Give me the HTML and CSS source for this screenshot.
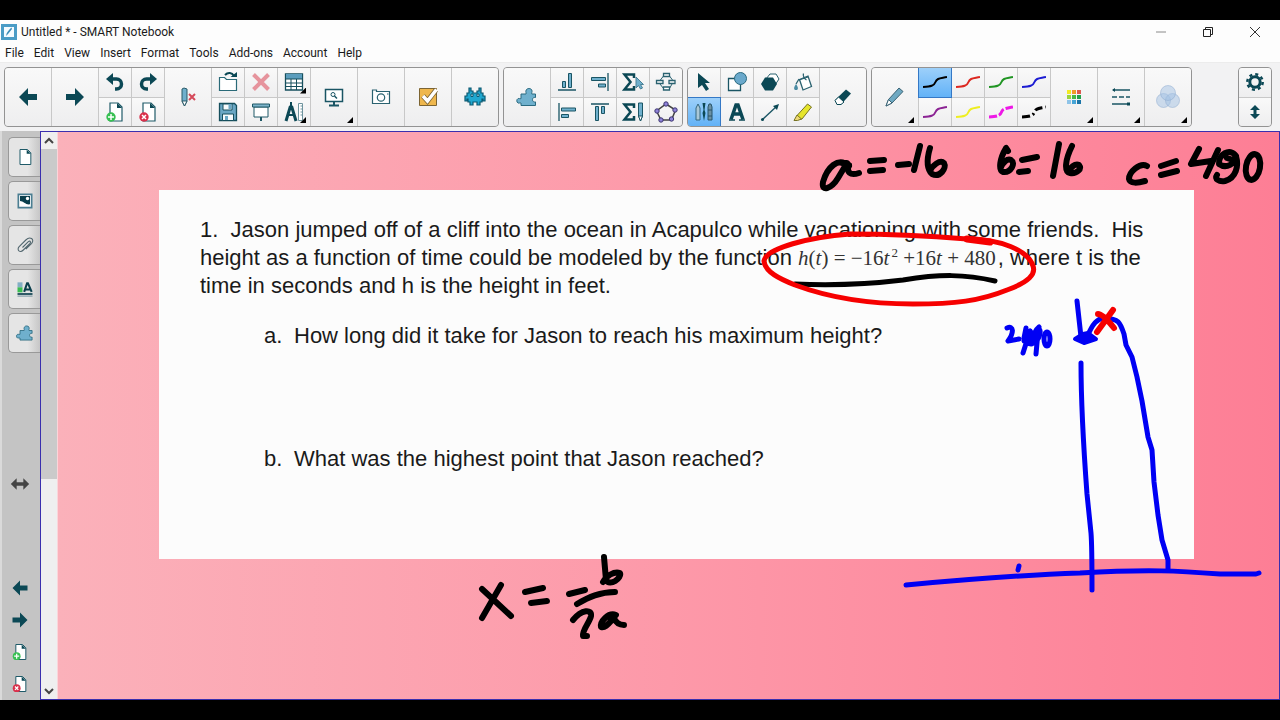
FILE: index.html
```html
<!DOCTYPE html>
<html lang="en">
<head>
<meta charset="utf-8">
<title>Untitled * - SMART Notebook</title>
<link rel="stylesheet" href="styles.css">
</head>
<body>
<svg class="defs" aria-hidden="true">
  <symbol id="left" viewBox="0 0 24 24"><path fill="#0b4855" d="M3 12l9-9v6h9v6h-9v6z"/></symbol>
  <symbol id="right" viewBox="0 0 24 24"><path fill="#0b4855" d="M21 12l-9-9v6H3v6h9v6z"/></symbol>
  <symbol id="page" viewBox="0 0 24 24"><path d="M6 3h9l4 4v14H6z" fill="#fff" stroke="#1f5a68" stroke-width="1.2"/><path d="M14 3v5h5z" fill="#0b4855"/></symbol>
  <symbol id="page-add" viewBox="0 0 24 24"><path d="M7 3h8l4 4v14H7z" fill="#fff" stroke="#1f5a68" stroke-width="1.2"/><path d="M14 3v5h5z" fill="#0b4855"/><circle cx="8" cy="17" r="4.7" fill="#37c052"/><path d="M8 14v6M5 17h6" stroke="#fff" stroke-width="1.5"/></symbol>
  <symbol id="page-del" viewBox="0 0 24 24"><path d="M7 3h8l4 4v14H7z" fill="#fff" stroke="#1f5a68" stroke-width="1.2"/><path d="M14 3v5h5z" fill="#0b4855"/><circle cx="8" cy="17" r="4.7" fill="#d9304b"/><path d="M6 15l4 4M10 15l-4 4" stroke="#fff" stroke-width="1.5"/></symbol>
  <symbol id="puzzle" viewBox="0 0 24 24"><path d="M6 9h5c.6-1.200-.8-2 .2-4 1-2 4.600-2 5.600 0 .8 2-.6 2.800 0 4H20.500v3.500c-1.500-.4-3 .3-3 2.200s1.500 2.600 3 2.200V20.500H6V18c-1.300-.5-1.800.5-3 0-1.600-.8-1.600-3.600 0-4.400 1.200-.5 1.700.4 3 0z" fill="#6fb0cd" stroke="#2a6a80" stroke-width="1"/></symbol>
  <symbol id="wave" viewBox="0 0 24 24"><path d="M0 17c8-.5 11-1 12.500-5S17 8.500 24 7" fill="none" stroke="currentColor" stroke-width="2"/></symbol>
</svg>
<div class="window">
  <header class="titlebar">
    <svg class="app-icon" viewBox="0 0 16 16"><rect x="1.500" y="1.500" width="13" height="13" fill="#f4fbff" stroke="#4a9cc6" stroke-width="3"/><path d="M5 12c.5-4 3-6 5.500-8.500L11 5 7 10z" fill="#3d8db8"/></svg>
    <h1 class="title">Untitled * - SMART Notebook</h1>
    <div class="caption">
      <button class="caption-btn" aria-label="Minimize"><svg viewBox="0 0 12 12"><path d="M1 6h10" stroke="#8a8a8a"/></svg></button>
      <button class="caption-btn" aria-label="Restore"><svg viewBox="0 0 12 12"><path d="M1.500 3.500h7v7h-7zM3.500 3V1.500h7v7H9" fill="none" stroke="#222"/></svg></button>
      <button class="caption-btn" aria-label="Close"><svg viewBox="0 0 12 12"><path d="M1 1l10 10M11 1L1 11" stroke="#333"/></svg></button>
    </div>
  </header>
  <nav class="menubar">
    <button>File</button><button>Edit</button><button>View</button><button>Insert</button><button>Format</button><button>Tools</button><button>Add-ons</button><button>Account</button><button>Help</button>
  </nav>
  <div class="toolbar" role="toolbar">
    <div class="group">
      <button class="tool" aria-label="Previous page"><svg viewBox="0 0 24 24"><use href="#left"/></svg></button>
      <button class="tool" aria-label="Next page"><svg viewBox="0 0 24 24"><use href="#right"/></svg></button>
      <div class="pair">
        <button class="tool" aria-label="Undo"><svg viewBox="0 0 24 24"><path d="M7 9h6.500a4.500 4.500 0 0 1 0 10H12" fill="none" stroke="#0b4855" stroke-width="3.500"/><path d="M3 9l7-6v12z" fill="#0b4855"/></svg></button>
        <button class="tool" aria-label="Add page"><svg viewBox="0 0 24 24"><use href="#page-add"/></svg></button>
      </div>
      <div class="pair">
        <button class="tool" aria-label="Redo"><svg viewBox="0 0 24 24"><path d="M17 9h-6.500a4.500 4.500 0 0 0 0 10H12" fill="none" stroke="#0b4855" stroke-width="3.500"/><path d="M21 9l-7-6v12z" fill="#0b4855"/></svg></button>
        <button class="tool" aria-label="Delete page"><svg viewBox="0 0 24 24"><use href="#page-del"/></svg></button>
      </div>
      <button class="tool" aria-label="Clear ink"><svg viewBox="0 0 24 24"><path d="M6 4l2-1 3 1v12l-2.500 5L6 16z" fill="#6fb0cd" stroke="#2a5a68"/><path d="M6 16h5l-2.500 5z" fill="#fff" stroke="#2a5a68"/><path d="M13 9l6 6M19 9l-6 6" stroke="#d5495a" stroke-width="2"/></svg></button>
      <div class="pair">
        <button class="tool" aria-label="Open"><svg viewBox="0 0 24 24"><path d="M3.500 7.500h5l2 2h10v11h-17z" fill="#fff" stroke="#2a6a78" stroke-width="1.200"/><path d="M9 5c3-3 7-2.500 9 1" fill="none" stroke="#0b4855" stroke-width="2"/><path d="M14.500 7h6.500V2z" fill="#0b4855"/></svg></button>
        <button class="tool" aria-label="Save"><svg viewBox="0 0 24 24"><path d="M3.500 3.500h15l2 2v15h-17z" fill="#6ba7c4" stroke="#164f5d" stroke-width="1.300"/><path d="M7 4h9v6H7zM6.500 14h11v6.500h-11z" fill="#f7fbfc" stroke="#164f5d"/><path d="M12.500 4h3v5h-3zM9 16h3v4H9z" fill="#6ba7c4"/></svg></button>
      </div>
      <div class="pair">
        <button class="tool" aria-label="Delete"><svg viewBox="0 0 24 24"><path d="M4.500 4.500l15 15M19.500 4.500l-15 15" stroke="#e6949d" stroke-width="4"/></svg></button>
        <button class="tool" aria-label="Screen shade"><svg viewBox="0 0 24 24"><path d="M5 7h14v10H5z" fill="#fff" stroke="#1e5866"/><path d="M3.500 4h17v3h-17z" fill="#7db3ca" stroke="#1e5866"/><path d="M12 17v4" stroke="#1e5866" stroke-width="2"/></svg></button>
      </div>
      <div class="pair">
        <button class="tool" aria-label="Table"><svg viewBox="0 0 24 24"><path d="M3.500 4h17v16h-17z" fill="#fff" stroke="#164f5d" stroke-width="1.300"/><path d="M4 4h16v5H4z" fill="#5b9dbd"/><path d="M3 9h18M3 13h18M3 16.500h18M9 9v11M14.500 9v11" stroke="#164f5d"/></svg><i class="more"></i></button>
        <button class="tool" aria-label="Measurement tools"><svg viewBox="0 0 24 24"><path d="M4 21L8.500 6M14 21L9.500 6" stroke="#0b4855" stroke-width="3"/><path d="M6 15h6M9 2v5" stroke="#0b4855" stroke-width="2"/><path d="M16.500 3.500h4v17h-4z" fill="#fff" stroke="#6f949e"/><path d="M18.500 6h2M18.500 9h2M18.500 12h2M18.500 15h2" stroke="#6f949e"/></svg><i class="more"></i></button>
      </div>
      <button class="tool" aria-label="View screens"><svg viewBox="0 0 24 24"><path d="M3.500 4.500h17v12h-17z" fill="#fff" stroke="#1a5564" stroke-width="1.500"/><path d="M12 17v3M7 20.500h10" stroke="#1a5564" stroke-width="2"/><circle cx="11" cy="9.500" r="2" fill="none" stroke="#1a5564"/><path d="M12.500 11l2.500 2.500" stroke="#1a5564" stroke-width="1.500"/></svg><i class="more"></i></button>
      <button class="tool" aria-label="Screen capture"><svg viewBox="0 0 24 24"><path d="M3.500 7.500V5h4v1.500h13v12h-17z" fill="#fff" stroke="#2a6270" stroke-width="1.200"/><circle cx="12" cy="12.500" r="3.700" fill="none" stroke="#2a6270" stroke-width="1.200"/><path d="M18 9h1.500" stroke="#2a6270"/></svg></button>
      <button class="tool" aria-label="Response"><svg viewBox="0 0 24 24"><path d="M3.500 3.500h17v17h-17z" fill="#efb74d" stroke="#7c6433" stroke-width="1"/><path d="M7 11l4.500 5L20 5" fill="none" stroke="#7c6433" stroke-width="5"/><path d="M7 11l4.500 5L20.500 4.500" fill="none" stroke="#fff" stroke-width="3.500"/></svg></button>
      <button class="tool" aria-label="Game activities"><svg viewBox="0 0 24 24"><path d="M6 3h2v3h2v2h4V6h2V3h2v5h2v3h2v5h-2v-2h-1v3h-2v3h-3v-3h-4v3H7v-3H5v-3H4v2H2v-5h2V8h2z" fill="#20a7cf" stroke="#0d5971" stroke-width="1.200"/><path d="M8 9h2v2.500H8zM14 9h2v2.500h-2z" fill="#d9f3fa" stroke="#0d5971"/></svg></button>
    </div>
    <div class="group">
      <button class="tool" aria-label="Add-ons"><svg viewBox="0 0 24 24"><use href="#puzzle"/></svg></button>
      <div class="pair">
        <button class="tool" aria-label="Align bottom"><svg viewBox="0 0 24 24"><path d="M3 20h18" stroke="#1a5564" stroke-width="1.300"/><path d="M7.500 11.500h3v6h-3zM13.500 3.500h3v14h-3z" fill="#6fb0cd" stroke="#1a5564"/></svg></button>
        <button class="tool" aria-label="Align left"><svg viewBox="0 0 24 24"><path d="M4 3v18" stroke="#1a5564" stroke-width="1.300"/><path d="M6.500 8h14v3h-14zM6.500 14.500h7v3h-7z" fill="#6fb0cd" stroke="#1a5564"/></svg></button>
      </div>
      <div class="pair">
        <button class="tool" aria-label="Align right"><svg viewBox="0 0 24 24"><path d="M20 3v18" stroke="#1a5564" stroke-width="1.300"/><path d="M3.500 7.500h14v3h-14zM10.500 14h7v3h-7z" fill="#6fb0cd" stroke="#1a5564"/></svg></button>
        <button class="tool" aria-label="Align top"><svg viewBox="0 0 24 24"><path d="M3 4h18" stroke="#1a5564" stroke-width="1.300"/><path d="M7.500 6.500h3v14h-3zM13.500 6.500h3v7h-3z" fill="#6fb0cd" stroke="#1a5564"/></svg></button>
      </div>
      <div class="pair">
        <button class="tool" aria-label="Select math"><svg viewBox="0 0 24 24"><path d="M13 8V4.500H3.500l6 7.500-6 7.500H13V16" fill="none" stroke="#0b4855" stroke-width="2.500"/><path d="M15 7v11l2.500-2.500 2 3.500 2-1-2-3.500h3z" fill="#6fb0cd" stroke="#4a8096"/></svg></button>
        <button class="tool" aria-label="Math pen"><svg viewBox="0 0 24 24"><path d="M13 8V4.500H3.500l6 7.500-6 7.500H13V16" fill="none" stroke="#0b4855" stroke-width="2.500"/><path d="M17.500 3h4v13l-2 5-2-5z" fill="#6fb0cd" stroke="#1a5564"/><path d="M17.500 16h4l-2 5z" fill="#fff" stroke="#1a5564"/></svg></button>
      </div>
      <div class="pair">
        <button class="tool" aria-label="Concept map"><svg viewBox="0 0 24 24"><path d="M9.500 6L6 10.500M15.500 6l3 4M6 14l3.500 4.500M18 14l-2.500 4.500" stroke="#2a6270"/><path d="M9.500 3.500h6v3h-6zM2.500 10.500h6.500v3H2.500zM15 10.500h6v3h-6zM9.500 17h6v3h-6z" fill="#fff" stroke="#2a6270" stroke-width="1.300"/></svg></button>
        <button class="tool" aria-label="GeoGebra"><svg viewBox="0 0 24 24"><path d="M12 4l9.500 6-4 10H7L2.500 11z" fill="none" stroke="#444" stroke-width="1.500"/><g fill="#8f83d9" stroke="#3d3670"><circle cx="12" cy="4" r="2.200"/><circle cx="21" cy="10" r="2.200"/><circle cx="17.500" cy="19" r="2.200"/><circle cx="7" cy="20" r="2.200"/><circle cx="3" cy="11" r="2.200"/></g></svg></button>
      </div>
    </div>
    <div class="group">
      <div class="pair">
        <button class="tool" aria-label="Select"><svg viewBox="0 0 24 24"><path d="M6 3v15l4-3 4 6 3-2-4-6h5z" fill="#0b4855"/></svg></button>
        <button class="tool active" aria-label="Pens"><svg viewBox="0 0 24 24"><path d="M4 8l2-4 2 4v12H4z" fill="#a9c8d8" stroke="#35677e"/><path d="M10.500 3h3l-1 7 1 3-1.500 8-1.500-8 1-3z" fill="#0b4855"/><path d="M16 7l1-3h2l1 3v13h-4z" fill="#6c91a3" stroke="#29556a"/><path d="M16 10h4M16 16h4" stroke="#29556a"/></svg></button>
      </div>
      <div class="pair">
        <button class="tool" aria-label="Shapes"><svg viewBox="0 0 24 24"><path d="M3.500 8.500h12v12h-12z" fill="#fff" stroke="#1a5564" stroke-width="1.300"/><circle cx="15.500" cy="8.500" r="6" fill="#6ba9cc" stroke="#2a6a80"/></svg></button>
        <button class="tool" aria-label="Text"><svg viewBox="0 0 24 24"><path d="M6 19.500L11 5h2l5 14.500M8.500 14h7" fill="none" stroke="#0b4855" stroke-width="3.500"/><path d="M4 20h6M14 20h6" stroke="#0b4855" stroke-width="1.500"/></svg></button>
      </div>
      <div class="pair">
        <button class="tool" aria-label="Regular polygons"><svg viewBox="0 0 24 24"><path d="M12 4h6l3 5-4 6h-5l-4-6z" fill="#fff" stroke="#2a6270"/><path d="M7 7.500h8l4 6.500-4 6.500H7L3 14z" fill="#0b4855"/></svg></button>
        <button class="tool" aria-label="Lines"><svg viewBox="0 0 24 24"><path d="M4 20L19 6" stroke="#1a5564" stroke-width="1.300"/><path d="M21 4l-6 2 4 4z" fill="#0b4855"/><circle cx="4.500" cy="19.500" r="1.500" fill="#0b4855"/></svg></button>
      </div>
      <div class="pair">
        <button class="tool" aria-label="Fill"><svg viewBox="0 0 24 24"><path d="M8.500 9.500L17 6l3.500 10.500-8.500 3.500z" fill="#fff" stroke="#2a6270" stroke-width="1.300"/><path d="M15.500 10c-2-1-4-4-3-6.500M8 10l9-3M8 9l-3 5" fill="none" stroke="#2a6270" stroke-width="1.300"/><path d="M5 14c-3 4-2 6 0 6s3-2 0-6z" fill="#4a8ba3"/></svg></button>
        <button class="tool" aria-label="Highlighter"><svg viewBox="0 0 24 24"><path d="M16.500 4l4 3L11 19l-5 .5.500-4.500z" fill="#e6e52c" stroke="#777323"/><path d="M6 15l4.500 4-4 1.500H3z" fill="#efd974" stroke="#777323"/></svg></button>
      </div>
      <button class="tool" aria-label="Eraser"><svg viewBox="0 0 24 24"><path d="M4 15L15 4.500l5 4L10 19.500H6z" fill="#0b4855"/><path d="M7.500 12l5.500 5-3 2.500H6L4 15.500z" fill="#fff" stroke="#0b4855"/></svg></button>
    </div>
    <div class="group">
      <button class="tool" aria-label="Pen type"><svg viewBox="0 0 24 24"><path d="M16 3l4 3.500L9 18l-6 3 2.500-6.500z" fill="#6fa9c2" stroke="#3a6375"/><path d="M5.500 14.500L9 18l-6 3z" fill="#fff" stroke="#3a6375"/></svg><i class="more"></i></button>
      <div class="pair">
        <button class="tool active ink-black" aria-label="Black line"><svg viewBox="0 0 24 24"><use href="#wave"/></svg></button>
        <button class="tool ink-purple" aria-label="Purple line"><svg viewBox="0 0 24 24"><use href="#wave"/></svg></button>
      </div>
      <div class="pair">
        <button class="tool ink-red" aria-label="Red line"><svg viewBox="0 0 24 24"><use href="#wave"/></svg></button>
        <button class="tool ink-yellow" aria-label="Yellow line"><svg viewBox="0 0 24 24"><use href="#wave"/></svg></button>
      </div>
      <div class="pair">
        <button class="tool ink-green" aria-label="Green line"><svg viewBox="0 0 24 24"><use href="#wave"/></svg></button>
        <button class="tool" aria-label="Magenta dashed line"><svg viewBox="0 0 24 24"><path d="M0 17c8-.5 11-1 12.500-5S17 8.500 24 7" fill="none" stroke="#ee18e6" stroke-width="3" stroke-dasharray="8 2"/></svg></button>
      </div>
      <div class="pair">
        <button class="tool ink-blue" aria-label="Blue line"><svg viewBox="0 0 24 24"><use href="#wave"/></svg></button>
        <button class="tool" aria-label="Black dashed line"><svg viewBox="0 0 24 24"><path d="M0 17c8-.5 11-1 12.500-5S17 8.500 24 7" fill="none" stroke="#000" stroke-width="3" stroke-dasharray="8 3 2 3"/></svg></button>
      </div>
      <button class="tool" aria-label="Color"><svg viewBox="0 0 24 24"><g transform="translate(5 5)"><path fill="#f4ea22" d="M0 0h4v4H0z"/><path fill="#f09a28" d="M5 0h4v4H5z"/><path fill="#dc5a4e" d="M10 0h4v4h-4z"/><path fill="#9bd43e" d="M0 5h4v4H0z"/><path fill="#47b944" d="M5 5h4v4H5z"/><path fill="#22a04a" d="M10 5h4v4h-4z"/><path fill="#8fc4e8" d="M0 10h4v4H0z"/><path fill="#46a4d6" d="M5 10h4v4H5z"/><path fill="#1b75a8" d="M10 10h4v4h-4z"/></g></svg><i class="more"></i></button>
      <button class="tool" aria-label="Line style"><svg viewBox="0 0 24 24"><path d="M4 5h17M3 19h17" stroke="#1a5564" stroke-width="1.300"/><path d="M3 12h18" stroke="#1a5564" stroke-width="1.300" stroke-dasharray="5 2"/><path d="M3 5l3-2v4zM18 17.500h3v3h-3z" fill="#0b4855"/></svg><i class="more"></i></button>
      <button class="tool" aria-label="Transparency"><svg viewBox="0 0 24 24"><g fill="#a3c1e4" fill-opacity=".5" stroke="#8fadd2" stroke-opacity=".5"><circle cx="7.500" cy="15.500" r="7"/><circle cx="16.500" cy="15.500" r="7"/><circle cx="12" cy="8" r="7.500"/></g></svg><i class="more"></i></button>
    </div>
    <div class="group settings">
      <div class="pair">
        <button class="tool" aria-label="Customize toolbar"><svg viewBox="0 0 24 24"><circle cx="12" cy="12" r="5.200" fill="none" stroke="#0b4855" stroke-width="3"/><circle cx="12" cy="12" r="7.700" fill="none" stroke="#0b4855" stroke-width="2.500" stroke-dasharray="3.020 3.027"/></svg></button>
        <button class="tool" aria-label="Move toolbar"><svg viewBox="0 0 24 24"><path d="M12 5l5 5h-3.500v4H17l-5 5-5-5h3.500v-4H7z" fill="#0b4855"/></svg></button>
      </div>
    </div>
  </div>
  <main class="workspace">
    <aside class="sidebar">
      <div class="tabs">
        <button class="tab" aria-label="Page sorter"><svg viewBox="0 0 24 24"><use href="#page"/></svg></button>
        <button class="tab" aria-label="Gallery"><svg viewBox="0 0 24 24"><path d="M4 4h16v16H4z" fill="#fff" stroke="#4b7e92" stroke-width="2"/><path d="M6 6h12v10c-5 1-8-4-12-4z" fill="#0b3f4d"/><circle cx="15" cy="9" r="2" fill="#fff"/></svg></button>
        <button class="tab" aria-label="Attachments"><svg viewBox="0 0 24 24"><path d="M9 15l7-7c2-1.500 3.500 0 2 2l-8 8c-4 4-8.500 0-5-4l8-8c5-5 11-1 7 4l-7 7" fill="none" stroke="#52676f" stroke-width="1.300"/></svg></button>
        <button class="tab" aria-label="Properties"><svg viewBox="0 0 24 24"><path d="M3 4h6v6H3z" fill="#83afc4"/><path d="M3 10h6v6H3z" fill="#39bd51"/><path d="M11 15.500L14.500 5h1L20 15.500M12 12.500h6" stroke="#0b3f4d" stroke-width="2.500" fill="none"/><path d="M3 18h18" stroke="#0b3f4d" stroke-width="2"/><path d="M3 20.500h18" stroke="#5d8190"/></svg></button>
        <button class="tab" aria-label="Add-ons tab"><svg viewBox="0 0 24 24"><use href="#puzzle"/></svg></button>
      </div>
      <button class="side-btn resize" aria-label="Move sidebar"><svg viewBox="0 0 24 24"><path d="M1 12l7-7v5h8V5l7 7-7 7v-5H8v5z" fill="#444"/></svg></button>
      <div class="side-actions">
        <button class="side-btn" aria-label="Previous"><svg viewBox="0 0 24 24"><use href="#left"/></svg></button>
        <button class="side-btn" aria-label="Next"><svg viewBox="0 0 24 24"><use href="#right"/></svg></button>
        <button class="side-btn" aria-label="New page"><svg viewBox="0 0 24 24"><use href="#page-add"/></svg></button>
        <button class="side-btn" aria-label="Remove page"><svg viewBox="0 0 24 24"><use href="#page-del"/></svg></button>
      </div>
    </aside>
    <div class="board">
      <div class="scrollbar">
        <button class="scroll-btn" aria-label="Scroll up"><svg viewBox="0 0 10 10"><path d="M1 7l4-4 4 4" fill="none" stroke="#444" stroke-width="2"/></svg></button>
        <div class="track"><div class="thumb"></div></div>
        <button class="scroll-btn" aria-label="Scroll down"><svg viewBox="0 0 10 10"><path d="M1 3l4 4 4-4" fill="none" stroke="#444" stroke-width="2"/></svg></button>
      </div>
      <section class="canvas">
        <article class="paper">
          <p class="problem">1.&nbsp; Jason jumped off of a cliff into the ocean in Acapulco while vacationing with some friends.&nbsp; His<br>height as a function of time could be modeled by the function <span class="formula"><em>h</em>(<em>t</em>) = −16<em>t</em><sup>2</sup> +16<em>t</em> + 480</span>, where t is the<br>time in seconds and h is the height in feet.</p>
          <p class="question"><span class="letter">a.</span><span>How long did it take for Jason to reach his maximum height?</span></p>
          <p class="question last"><span class="letter">b.</span><span>What was the highest point that Jason reached?</span></p>
        </article>
        <svg class="ink" viewBox="58 132 1221 567" preserveAspectRatio="xMinYMin meet" aria-hidden="true">
          <g stroke="#000" stroke-width="6">
            <path d="M849 166C838 156 827 168 823 182C821 193 832 188 838 178L847 163L842 163M849 165C846 172 850 176 859 173"/>
            <path d="M870 161L884 160M870 171L883 170M898 165L909 164M920 146L914 170M930 148C927 158 926 168 932 174C940 178 947 168 944 163C940 159 932 166 930 171"/>
            <path d="M1008 151L1006 148C1000 158 998 170 1003 172C1011 173 1016 163 1011 160C1007 158 1003 163 1001 167M1022 160L1037 157M1019 172L1028 171M1059 144L1053 176M1072 146C1065 160 1064 172 1070 173C1077 174 1082 169 1079 165C1075 163 1070 168 1068 172"/>
            <path d="M1147 166C1140 162 1129 172 1129 179C1130 184 1138 183 1145 181M1161 166L1176 161M1161 175L1177 171M1199 149L1191 164L1211 161M1218 150L1206 176"/>
            <path d="M1236 156C1230 147 1218 155 1219 164C1226 169 1236 164 1236 156C1239 166 1236 178 1225 181C1219 182 1214 179 1217 175M1227 158L1233 160"/>
            <ellipse cx="1253" cy="167" rx="7" ry="13" transform="rotate(10 1253 167)"/>
            <path stroke-width="5" d="M795 284C840 286 870 284 903 280C940 274 965 274 995 281"/>
            <path d="M482 589L511 616M501 585L482 618M525 592L543 588M531 603L547 601M569 594L585 590M577 604C589 597 600 592 615 592M604 557L606 580C610 587 622 578 620 573C614 571 606 576 603 582"/>
            <path d="M573 620C582 609 592 609 591 616C590 622 582 630 583 636L587 636M616 615C608 612 600 622 601 627C606 629 611 620 614 618C616 623 620 625 624 625"/>
          </g>
          <g stroke="#0000f4" stroke-width="6">
            <path stroke-width="5" d="M1077 301L1081 337"/>
            <path fill="#0000f4" stroke-width="4" d="M1075 339L1083 334L1088 333L1096 339L1084 343Z"/>
            <path stroke-width="5" d="M1087 337C1093 323 1097 319 1104 318C1119 319 1120 322 1124 334L1126 345L1132 357L1137 377L1142 401L1148 437L1152 450L1154 482L1158 515L1162 540L1168 560V569"/>
            <path stroke-width="5" d="M1081 363C1081 400 1083 440 1087 494L1091 533Q1092 545 1092 590"/>
            <path stroke-width="5" d="M906 585C960 580 1020 575 1080 573C1150 569 1180 571 1220 574L1256 574L1259 573M1019 566L1018 570"/>
            <path stroke-width="5" d="M1007 328C1014 325 1014 333 1008 341L1019 339M1026 328L1024 338M1030 331L1023 353M1024 341L1036 338M1030 331C1038 340 1032 348 1028 342M1039 327C1030 334 1034 348 1039 337C1042 329 1038 327 1038 332L1036 354"/>
            <ellipse cx="1047" cy="339" rx="3" ry="7" stroke-width="5"/>
          </g>
          <g stroke="#f60000">
            <path stroke-width="5" d="M967 239C930 236 890 234 850 234C810 237 766 248 764 261C765 272 780 279 795 285C830 298 870 304 913 304C955 304 980 301 1007 290C1029 282 1036 274 1033 266C1028 250 1000 239 967 239"/>
            <path stroke-width="7" d="M967 239L990 242"/>
            <path stroke-width="6" d="M1098 314Q1103 314 1114 328M1113 310L1097 332"/>
          </g>
        </svg>
      </section>
    </div>
  </main>
</div>
</body>
</html>
```
FILE: styles.css
```css
* { box-sizing: border-box; }

body {
  margin: 0;
  background: #000;
  color: #1a1a1a;
  font-family: Roboto, "Open Sans", sans-serif;
}

button {
  margin: 0;
  padding: 0;
  border: 0;
  background: none;
  color: inherit;
  font: inherit;
}

.defs { position: absolute; width: 0; height: 0; }

.window {
  display: flex;
  flex-direction: column;
  min-height: 100vh;
  padding: 20px 0;
}

.titlebar {
  display: flex;
  align-items: center;
  gap: 4px;
  height: 24px;
  padding: 0 2px 0 1px;
  background: #fdfdfd;
}

.app-icon { width: 16px; height: 16px; }

.title {
  flex: 1;
  margin: 0;
  font-size: 12px;
  font-weight: 400;
}

.caption { display: flex; }

.caption-btn {
  display: grid;
  place-items: center;
  width: 47px;
  height: 24px;
}

.caption-btn svg { width: 12px; height: 12px; }

.menubar {
  display: flex;
  gap: 10px;
  height: 19px;
  padding-left: 5px;
  border-bottom: 1px solid #ececec;
  background: #fdfdfd;
  font-size: 12px;
  line-height: 18px;
}

.toolbar {
  display: flex;
  gap: 4px;
  padding: 4px 8px 4px 4px;
  background: #f2f2f3;
}

.group {
  display: flex;
  gap: 1px;
  height: 60px;
  overflow: hidden;
  border: 1px solid #939393;
  border-radius: 4px;
  background: #c8c8c8;
}

.settings { margin-left: auto; }

.pair {
  display: grid;
  grid-template-rows: 1fr 1fr;
  gap: 1px;
}

.tool {
  position: relative;
  display: grid;
  place-items: center;
  width: 46px;
  background: linear-gradient(#f9f9f9, #eeeeef);
}

.pair .tool { width: 32px; }

.tool svg { width: 24px; height: 24px; }

.tool.active {
  background: linear-gradient(#9dd0fa, #62b2f7);
  outline: 1px solid #3478c6;
}

.ink-black { color: #000; }
.ink-purple { color: #8b2393; }
.ink-red { color: #dc2820; }
.ink-yellow { color: #eeee20; }
.ink-green { color: #209523; }
.ink-blue { color: #1c1cd2; }

.more {
  position: absolute;
  right: 4px;
  bottom: 3px;
  width: 6px;
  height: 6px;
  background: #000;
  clip-path: polygon(100% 0, 100% 100%, 0 100%);
}

.workspace {
  display: flex;
  flex: 1;
}

.sidebar {
  display: flex;
  flex-direction: column;
  width: 40px;
  padding-top: 6px;
  border-left: 2px solid #dadada;
  background: #c4c4c4;
}

.tabs {
  display: grid;
  gap: 4px;
  padding-left: 6px;
}

.tab {
  display: grid;
  place-items: center;
  height: 40px;
  border: 1px solid #999;
  border-right: 0;
  border-radius: 5px 0 0 5px;
  background: linear-gradient(90deg, #e5e5e5 60%, #c6c6c6);
}

.tab svg { width: 20px; height: 20px; }

.side-btn {
  display: grid;
  place-items: center;
  width: 36px;
  height: 32px;
}

.side-btn svg { width: 20px; height: 20px; }

.resize { margin: auto 0 72px; }

.side-actions { display: grid; }

.board {
  display: flex;
  flex: 1;
  border: 1px solid #3a2fae;
}

.scrollbar {
  display: flex;
  flex-direction: column;
  width: 17px;
  border-right: 1px solid #fbd5da;
  background: #efefef;
}

.scroll-btn {
  display: grid;
  place-items: center;
  height: 17px;
}

.scroll-btn svg { width: 10px; height: 10px; }

.track { flex: 1; }

.thumb {
  height: 62%;
  background: #cacaca;
}

.canvas {
  position: relative;
  flex: 1;
  padding: 58px 85px 58px 101px;
  background: linear-gradient(90deg, #fbb1ba, #fd99a9 50%, #fd7e95);
}

.paper {
  padding: 26px 40px 86px 41px;
  background: #fcfcfc;
  font-family: "Liberation Sans", Arial, sans-serif;
  font-size: 22px;
  line-height: 28px;
  white-space: nowrap;
}

.problem { margin: 0 0 22px; }

.question {
  display: flex;
  margin: 0 0 95px 64px;
}

.question.last { margin-bottom: 0; }

.letter { width: 30px; }

.formula {
  margin-right: 2px;
  color: #333;
  font-family: "Liberation Serif", "Times New Roman", serif;
  font-size: 21px;
}

.formula sup {
  margin-left: 2px;
  font-size: 13px;
  line-height: 0;
}

.ink {
  position: absolute;
  inset: 0;
  width: 100%;
  height: 100%;
  fill: none;
  stroke-linecap: round;
  stroke-linejoin: round;
  pointer-events: none;
}
```
